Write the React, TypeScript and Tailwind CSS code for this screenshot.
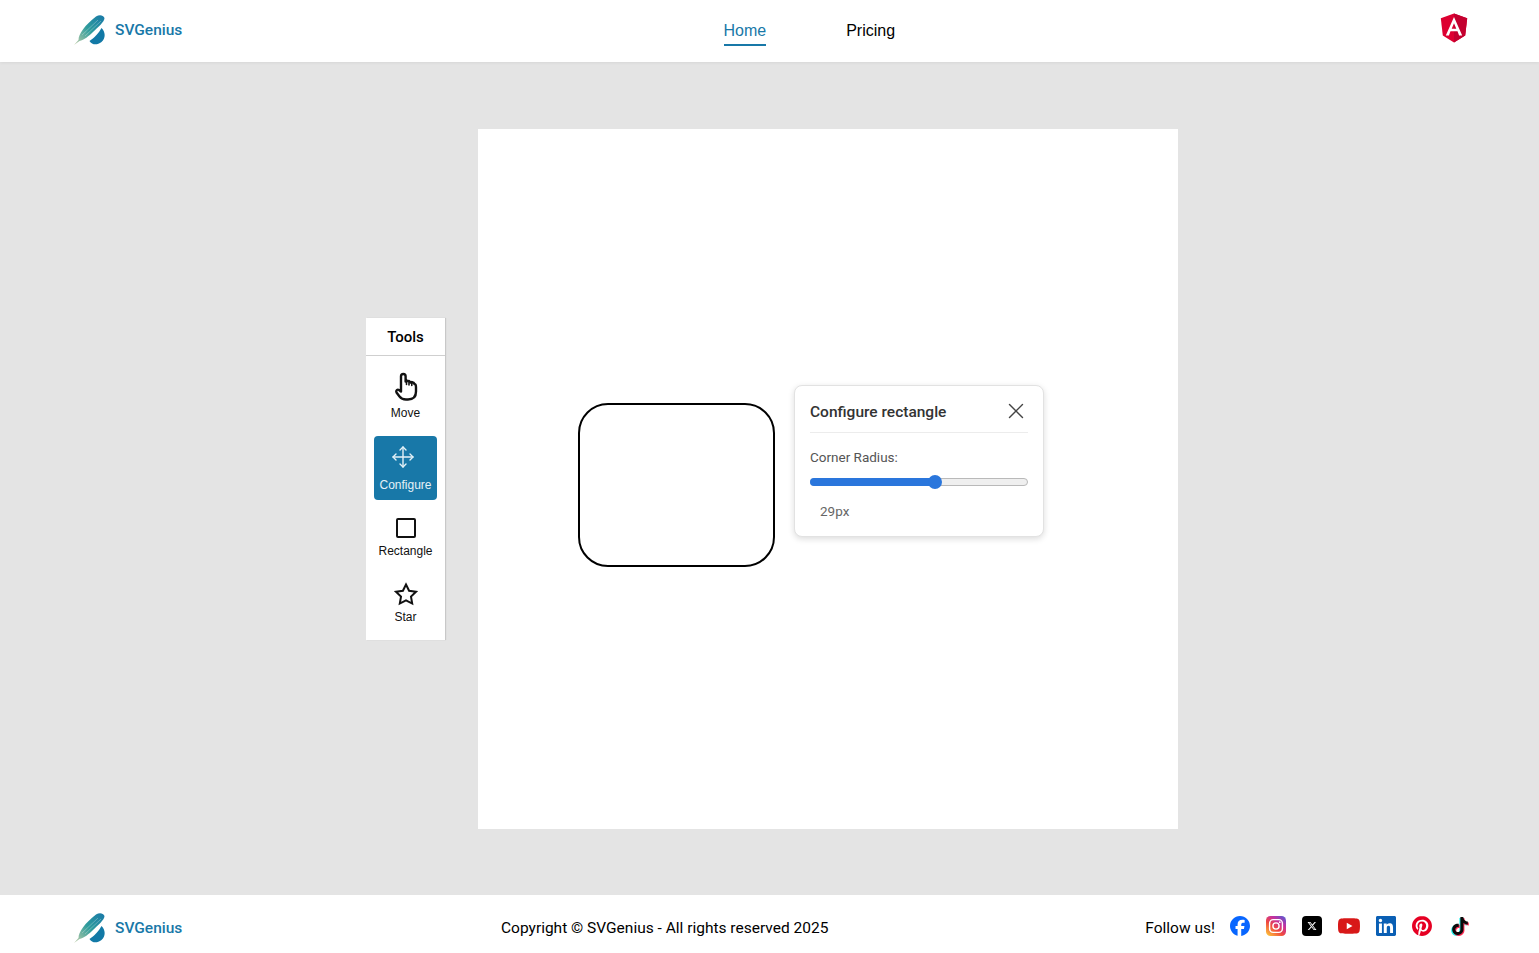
import { Move, X } from "lucide-react";
import { SiFacebook, SiLinkedin, SiPinterest, SiTiktok, SiYoutube } from "react-icons/si";
import { FaXTwitter } from "react-icons/fa6";

function Logo({ id }: { id: string }) {
  return (
    <div className="flex items-center gap-[9px]">
      <svg width="32" height="32" viewBox="0 0 32 32">
        <defs>
          <linearGradient id={id} x1="0" y1="1" x2="1" y2="0">
            <stop offset="0" stopColor="#c4cfa8" />
            <stop offset="0.5" stopColor="#2f9c9c" />
            <stop offset="1" stopColor="#1878a8" />
          </linearGradient>
        </defs>
        <path d="M0 31 L4.5 26 C4.5 20 11 11 22 2.5 C25 0.5 29 0.5 30.5 4 C30.5 8 24 13 19 18 C15 22 10 26 5.5 27 Z" fill={`url(#${id})`} />
        <path d="M15.5 27 C20 24 25 19 27.5 14 C31.5 18 32 24 27.5 28 C23 31.5 18 31 15.5 27 Z" fill="#1279a6" />
        <path d="M8 21 L24 6 M11 22 L27 7" stroke="#ffffff" strokeOpacity="0.4" strokeWidth="0.7" />
      </svg>
      <span className="mt-[2px] text-[15.5px] font-medium text-[#1878a8]">SVGenius</span>
    </div>
  );
}

function AngularIcon() {
  return (
    <svg width="28" height="30" viewBox="0 0 28 30">
      <path d="M14 0.5 L0.8 5.2 L2.8 22.6 L14 29.5 L25.2 22.6 L27.2 5.2 Z" fill="#dd0031" />
      <path d="M14 0.5 L14 29.5 L25.2 22.6 L27.2 5.2 Z" fill="#c3002f" />
      <path d="M14 4 L5.8 22.4 H8.9 L10.5 18.3 H17.5 L19.1 22.4 H22.2 Z M11.7 15.7 L14 10.2 L16.3 15.7 Z" fill="#ffffff" />
    </svg>
  );
}

function InstagramIcon() {
  return (
    <svg width="20" height="20" viewBox="0 0 20 20">
      <defs>
        <linearGradient id="ig" x1="0.1" y1="1" x2="0.9" y2="0">
          <stop offset="0" stopColor="#fdc43a" />
          <stop offset="0.4" stopColor="#f0483f" />
          <stop offset="0.7" stopColor="#c530a0" />
          <stop offset="1" stopColor="#5a58cf" />
        </linearGradient>
      </defs>
      <rect width="20" height="20" rx="4.5" fill="url(#ig)" />
      <rect x="3.6" y="3.6" width="12.8" height="12.8" rx="3.6" fill="none" stroke="#fff" strokeWidth="1.4" />
      <circle cx="10" cy="10" r="3.1" fill="none" stroke="#fff" strokeWidth="1.4" />
      <circle cx="13.8" cy="6.2" r="0.9" fill="#fff" />
    </svg>
  );
}

function TikTokIcon() {
  return (
    <span className="relative ml-[2px] block h-5 w-5">
      <SiTiktok size={18} className="absolute left-[0px] top-[2px] text-[#25f4ee]" />
      <SiTiktok size={18} className="absolute left-[2px] top-[2px] text-[#fe2c55]" />
      <SiTiktok size={18} className="absolute left-[1px] top-[1px] text-[#0b0b0b]" />
    </span>
  );
}

function ToolItem({ label, icon }: { label: string; icon: React.ReactNode }) {
  return (
    <div className="flex h-[66px] w-[63px] flex-col items-center pt-[13px] text-[#111111]">
      {icon}
      <span className="mt-[3px] font-['Liberation_Sans',sans-serif] text-xs leading-4">{label}</span>
    </div>
  );
}

function HandIcon() {
  return (
    <svg className="mt-[-9px]" width="24" height="30" viewBox="-1 -1.5 24 30" fill="none" stroke="currentColor" strokeWidth="2.4" strokeLinecap="round" strokeLinejoin="round">
      <path d="M6 18 V2.8 a2.3 2.3 0 0 1 4.6 0 V8 C13 7 15 7.5 15.5 9 C17 8.6 19 9 19.5 10.5 C20.6 10.6 21 12 21 14 V18 C21 23 18 26 13 26 H11 C8 26 6 25 4.5 23 L1.5 19 C0.5 17 2.5 15.5 4 16.5 L6 18" />
      <path d="M11.5 6 V11 M14 7 V11.5 M16.8 8 V12" strokeWidth="1.6" />
    </svg>
  );
}

function SquareIcon() {
  return (
    <svg width="24" height="24" viewBox="0 0 24 24" fill="none" stroke="currentColor" strokeWidth="2">
      <rect x="3" y="3" width="18" height="18" rx="1" />
    </svg>
  );
}

function StarIcon() {
  return (
    <svg width="24" height="24" viewBox="0 0 24 24" fill="none" stroke="currentColor" strokeWidth="2">
      <polygon points="12,2.5 15.09,8.76 22,9.77 17,14.64 18.18,21.52 12,18.27 5.82,21.52 7,14.64 2,9.77 8.91,8.76" />
    </svg>
  );
}

export default function App() {
  const socials = [
    <SiFacebook key="fb" size={20} className="text-[#0866ff]" />,
    <InstagramIcon key="ig" />,
    <span key="x" className="flex h-5 w-5 items-center justify-center rounded-[4px] bg-black">
      <FaXTwitter size={10} className="text-white" />
    </span>,
    <SiYoutube key="yt" size={22} className="text-[#d81818]" />,
    <SiLinkedin key="in" size={20} className="text-[#0a5fb4]" />,
    <SiPinterest key="pin" size={20} className="text-[#e60023]" />,
    <TikTokIcon key="tt" />,
  ];

  return (
    <div className="flex h-[953px] flex-col overflow-hidden font-['Roboto',sans-serif] text-black">
      <header className="relative z-10 flex h-[62px] shrink-0 items-center bg-white pl-[74px] pr-[71px] shadow-[0_1px_3px_rgba(0,0,0,0.06)]">
        <div className="w-[325px] pb-[2px]">
          <Logo id="logo-top" />
        </div>
        <nav className="ml-[324.5px] flex gap-20 font-['Liberation_Sans',sans-serif] text-base">
          <span className="mt-[4px] border-b-2 border-[#1878a8] pb-[2px] leading-[22px] text-[#1878a8]">Home</span>
          <span className="mt-[4px] pb-[4px] leading-[22px]">Pricing</span>
        </nav>
        <div className="ml-auto pb-[6px]">
          <AngularIcon />
        </div>
      </header>

      <main className="flex h-[833px] shrink-0 items-center justify-center gap-[33px] bg-[#e4e4e4] pl-[5px]">
        <aside className="flex h-[322px] w-[79px] flex-col items-center bg-white shadow-[1px_0_1px_rgba(0,0,0,0.12)]">
          <div className="flex h-[38px] w-full items-center justify-center border-b border-[#cfcfcf] pt-[2px] text-[15px] font-medium">
            Tools
          </div>
          <div className="mt-[12px] flex flex-col items-center">
            <div className="mb-[2px]">
              <ToolItem label="Move" icon={<HandIcon />} />
            </div>
            <div className="flex h-16 w-[63px] flex-col items-center rounded-[4px] bg-[#1878a8] pt-[9px] text-[#e4f1f7]">
              <Move size={24} strokeWidth={1.4} className="mr-[5px]" />
              <span className="mt-[8px] font-['Liberation_Sans',sans-serif] text-xs leading-4">Configure</span>
            </div>
            <div className="mt-[3px]">
              <ToolItem label="Rectangle" icon={<SquareIcon />} />
            </div>
            <ToolItem label="Star" icon={<StarIcon />} />
          </div>
        </aside>

        <section className="relative h-[700px] w-[700px] bg-white">
          <svg className="absolute left-[100px] top-[274px]" width="198" height="165" viewBox="0 0 198 165">
            <rect x="1" y="1" width="195" height="162" rx="29" fill="none" stroke="#000" strokeWidth="2" />
          </svg>

          <div className="absolute left-[316px] top-[256px] flex h-[152px] w-[250px] flex-col rounded-lg border border-[#e2e2e2] bg-white px-[15px] shadow-[0_2px_6px_rgba(0,0,0,0.14)]">
            <div className="flex h-[47px] shrink-0 items-center justify-between border-b border-[#ececec] pt-[9px]">
              <span className="text-[15.5px] font-medium text-[#333333]">Configure rectangle</span>
              <X size={26} strokeWidth={1.3} className="mr-[-1px] mt-[-5px] text-[#444444]" />
            </div>
            <span className="mt-[16px] text-[13.5px] leading-4 text-[#555555]">Corner Radius:</span>
            <div className="relative mt-[13px] h-[8px] w-full rounded-full border border-[#b9b9b9] bg-[#efefef]">
              <div className="absolute -left-px -top-px h-[8px] w-[125px] rounded-full bg-[#2a76dc]" />
              <div className="absolute left-[117px] top-[-4px] h-[14px] w-[14px] rounded-full bg-[#2a76dc]" />
            </div>
            <span className="mt-[17px] pl-[10px] text-[13.5px] leading-4 text-[#666666]">29px</span>
          </div>
        </section>
      </main>

      <footer className="flex h-[66px] shrink-0 items-center bg-white pl-[74px] pr-[69px]">
        <div className="w-[427px]">
          <Logo id="logo-bottom" />
        </div>
        <span className="mt-[2px] text-[15.5px]">Copyright © SVGenius - All rights reserved 2025</span>
        <div className="ml-auto flex items-center pb-[4px]">
          <span className="mr-[15px] mt-[5px] text-[15.5px]">Follow us!</span>
          <div className="flex items-center gap-4">
            {socials.map((icon) => icon)}
          </div>
        </div>
      </footer>
    </div>
  );
}
